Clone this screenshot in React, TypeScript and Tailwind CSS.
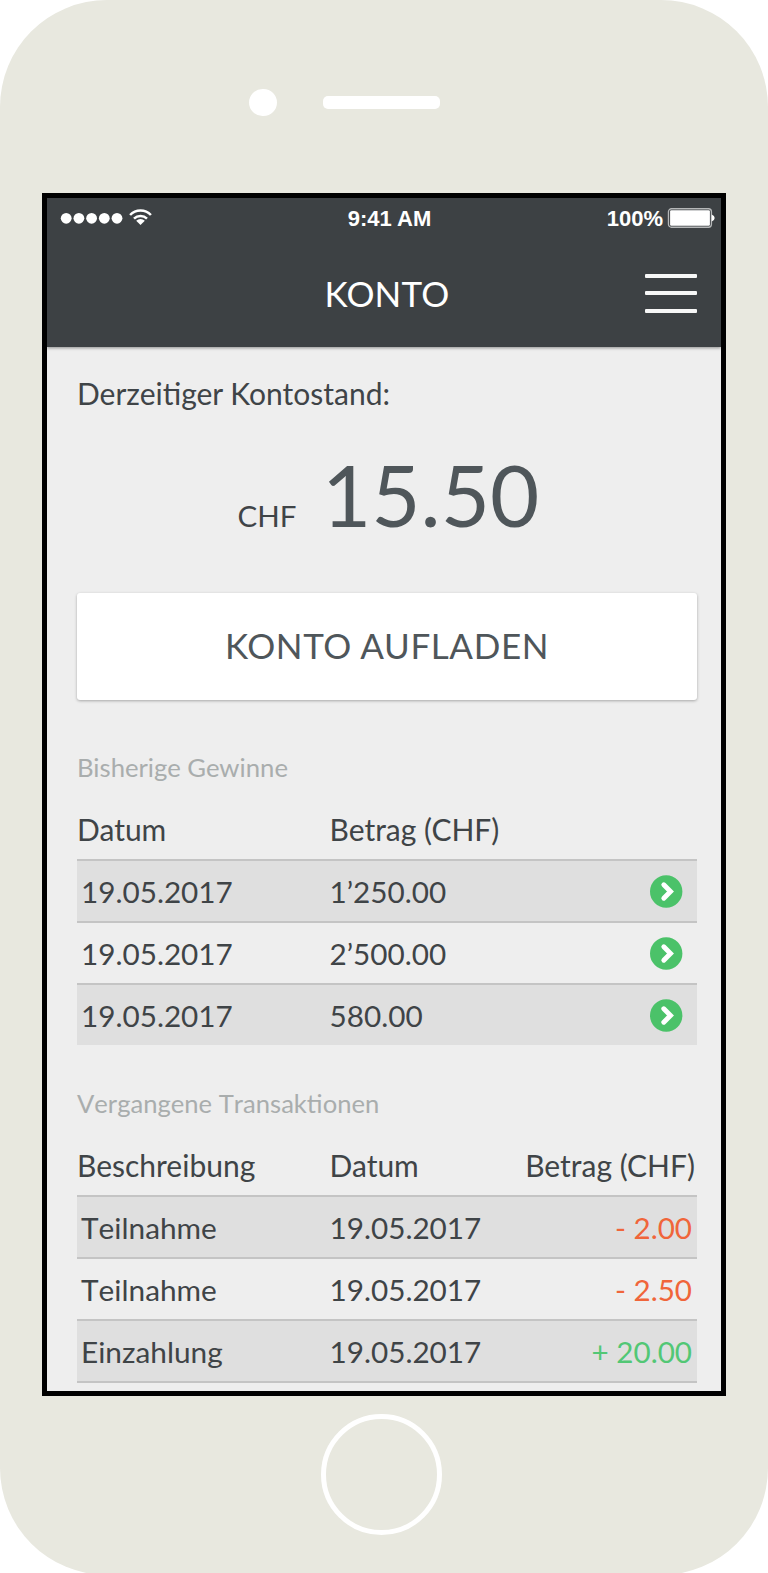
import type { ReactNode } from "react";

const winnings = [
  { date: "19.05.2017", amount: "1’250.00" },
  { date: "19.05.2017", amount: "2’500.00" },
  { date: "19.05.2017", amount: "580.00" },
];

const transactions = [
  { label: "Teilnahme", date: "19.05.2017", amount: "- 2.00", credit: false },
  { label: "Teilnahme", date: "19.05.2017", amount: "- 2.50", credit: false },
  { label: "Einzahlung", date: "19.05.2017", amount: "+ 20.00", credit: true },
];

function StatusBar() {
  return (
    <div className="grid h-[41px] grid-cols-3 items-center pl-[13px] pr-[6px] font-['Liberation_Sans',Arial,sans-serif] text-[22px] font-bold leading-none text-white">
      <div className="flex items-center">
        <svg width="94" height="20" viewBox="0 0 94 20" fill="none">
          {[6.2, 18.9, 31.6, 44.3, 57].map((x) => (
            <circle key={x} cx={x} cy="10.3" r="5.4" fill="#fff" />
          ))}
          <g stroke="#fff" strokeWidth="2.5">
            <path d="M70.1 7 A14.2 14.2 0 0 1 90.9 7" />
            <path d="M74 10.6 A9.3 9.3 0 0 1 87 10.6" />
          </g>
          <path d="M80.5 17 L76.2 12.8 A6.2 6.2 0 0 1 84.8 12.8 Z" fill="#fff" />
        </svg>
      </div>
      <div className="pl-[4px] pt-[2px] text-center">9:41 AM</div>
      <div className="flex items-center justify-end gap-[4px]">
        <span className="pt-[2px]">100%</span>
        <svg width="48" height="20" viewBox="0 0 48 20">
          <rect x="1.45" y="0.75" width="43" height="18.5" rx="3" fill="none" stroke="#b5b7b8" strokeWidth="1.3" />
          <rect x="3.1" y="2.3" width="39.8" height="15.4" rx="1.2" fill="#fff" />
          <path d="M44.7 6.5 Q47.7 7.8 47.7 10 T44.7 13.5 Z" fill="#fff" />
        </svg>
      </div>
    </div>
  );
}

function ArrowBadge() {
  return (
    <svg width="33" height="33" viewBox="0 0 33 33" fill="none">
      <circle cx="16.2" cy="16.5" r="16.2" fill="#4bc269" />
      <path d="M13.8 9.8 L20.5 16.5 L13.8 23.2" stroke="#fff" strokeWidth="4.9" strokeLinecap="round" strokeLinejoin="miter" />
    </svg>
  );
}

function Row({ shaded, last, children }: { shaded: boolean; last?: boolean; children: ReactNode }) {
  return (
    <div
      className={`grid grid-cols-[252.5px_190px_1fr] items-center border-t-2 border-[#c4c4c4] pl-[4px] ${
        shaded ? "bg-[#dfdfdf]" : ""
      } ${last ? "h-[64px] border-b-2" : "h-[62px]"}`}
    >
      {children}
    </div>
  );
}

export default function App() {
  return (
    <div className="h-[1573px] w-[768px] overflow-hidden bg-white font-['Lato',sans-serif] text-[#3f4447]">
      <div className="flex h-[1575px] flex-col rounded-[107px] bg-[#e8e8df]">
        <div className="flex h-[192.5px] shrink-0 items-center gap-[46.5px] pl-[249px] pt-[12.5px]">
          <div className="size-[27.5px] rounded-full bg-white" />
          <div className="h-[13px] w-[117px] rounded-[5px] bg-white" />
        </div>

        <div className="ml-[42px] h-[1203.5px] w-[684px] shrink-0 overflow-hidden border-5 border-black bg-[#eeeeee]">
          <header className="relative h-[149.5px] bg-[#3d4144] shadow-[0_1px_3px_rgba(0,0,0,0.4)]">
            <StatusBar />
            <div className="grid h-[108px] grid-cols-[1fr_auto_1fr] items-center pl-[6px] pr-[24px] pt-[1px]">
              <div />
              <h1 className="pl-[24px] text-[35px] leading-none tracking-[0.2px] text-white">KONTO</h1>
              <div className="flex flex-col items-end gap-[13.5px]">
                <span className="h-[4px] w-[52.5px] rounded-[1px] bg-[#f7f7f7]" />
                <span className="h-[4px] w-[52.5px] rounded-[1px] bg-[#f7f7f7]" />
                <span className="h-[4px] w-[52.5px] rounded-[1px] bg-[#f7f7f7]" />
              </div>
            </div>
          </header>

          <main className="pl-[30px] pr-[24px] pt-[26.4px] text-[30px]">
            <p className="h-[40px] leading-[40px] tracking-normal">Derzeitiger Kontostand:</p>

            <div className="mt-[29.9px] flex h-[102px] items-baseline pl-[160.5px]">
              <span className="w-[84.5px] text-[29.5px] leading-[40px]">CHF</span>
              <span className="text-[85px] leading-[102px] text-[#4f565a]">15.50</span>
            </div>

            <button className="mt-[47.7px] flex h-[107px] w-full items-center justify-center rounded-[3px] bg-white pb-[2px] text-[35px] leading-none tracking-[0.6px] text-[#4f565a] shadow-[0_1px_3px_rgba(0,0,0,0.3)]">
              KONTO AUFLADEN
            </button>

            <h2 className="mt-[48.7px] h-[36px] text-[25.7px] leading-[36px] text-[#a9adad]">Bisherige Gewinne</h2>
            <div className="mt-[24px] grid h-[40px] grid-cols-[252.5px_1fr] leading-[40px]">
              <span>Datum</span>
              <span>Betrag (CHF)</span>
            </div>
            <div className="mt-[10.8px]">
              {winnings.map((w, i) => (
                <Row key={i} shaded={i % 2 === 0}>
                  <span className="pt-[1px] text-[29.7px]">{w.date}</span>
                  <span className="-ml-[4px] pt-[1px] text-[29.7px]">{w.amount}</span>
                  <span className="flex justify-end pr-[14.5px]">
                    <ArrowBadge />
                  </span>
                </Row>
              ))}
            </div>

            <h2 className="mt-[39.5px] h-[36px] text-[25.6px] leading-[36px] text-[#a9adad] [font-kerning:none]">
              Vergangene Transaktionen
            </h2>
            <div className="mt-[23.8px] grid h-[40px] grid-cols-[252.5px_1fr_auto] leading-[40px]">
              <span>Beschreibung</span>
              <span>Datum</span>
              <span className="pr-[2px]">Betrag (CHF)</span>
            </div>
            <div className="mt-[10.6px]">
              {transactions.map((t, i) => (
                <Row key={i} shaded={i % 2 === 0} last={i === transactions.length - 1}>
                  <span className="pt-[1px] text-[29.8px] [font-kerning:none]">{t.label}</span>
                  <span className="-ml-[4px] pt-[1px] text-[29.7px]">{t.date}</span>
                  <span className={`pr-[5px] pt-[1px] text-right text-[29.6px] ${t.credit ? "text-[#52c775]" : "text-[#f0653a]"}`}>
                    {t.amount}
                  </span>
                </Row>
              ))}
            </div>
          </main>
        </div>

        <div className="ml-[321px] mt-[17.5px] size-[121px] shrink-0 rounded-full border-[5px] border-white" />
      </div>
    </div>
  );
}
